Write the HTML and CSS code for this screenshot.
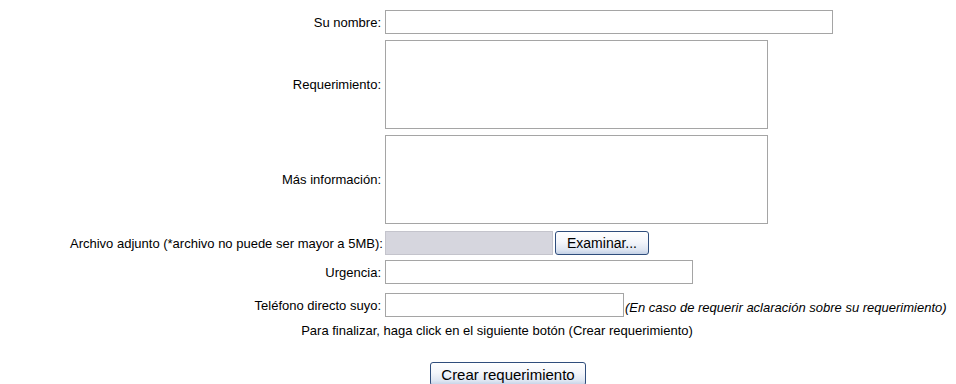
FILE: index.html
```html
<!DOCTYPE html>
<html lang="es">
<head>
    <meta charset="UTF-8">
    <title>Crear requerimiento</title>
    <link rel="stylesheet" href="styles.css">
</head>
<body>
    <form class="req-form">
        <div class="row row-first">
            <label class="label" for="nombre">Su nombre:</label>
            <input class="field field-name" type="text" id="nombre">
        </div>
        <div class="row">
            <label class="label" for="req">Requerimiento:</label>
            <textarea class="area" id="req"></textarea>
        </div>
        <div class="row">
            <label class="label" for="info">Más información:</label>
            <textarea class="area" id="info"></textarea>
        </div>
        <div class="row row-file">
            <label class="label">Archivo adjunto (*archivo no puede ser mayor a 5MB):</label>
            <div class="file-box"></div>
            <button type="button" class="btn btn-browse">Examinar...</button>
        </div>
        <div class="row row-urg">
            <label class="label" for="urg">Urgencia:</label>
            <input class="field field-urg" type="text" id="urg">
        </div>
        <div class="row row-phone">
            <label class="label" for="tel">Teléfono directo suyo:</label>
            <input class="field field-phone" type="text" id="tel">
            <span class="note">(En caso de requerir aclaración sobre su requerimiento)</span>
        </div>
        <p class="finish">Para finalizar, haga click en el siguiente botón (Crear requerimiento)</p>
        <div class="submit-row">
            <button type="button" class="btn btn-submit">Crear requerimiento</button>
        </div>
    </form>
</body>
</html>
```

FILE: styles.css
```css
body {
    margin: 0;
    background: #fff;
    color: #000;
    font-family: "Liberation Sans", Arial, sans-serif;
    font-size: 13px;
    overflow: hidden;
}

.req-form {
    padding: 10px 0 0 70px;
}

.row {
    display: flex;
    align-items: center;
    margin-top: 6px;
}

.row-first {
    margin-top: 0;
}

.row-file {
    margin-top: 7px;
}

.row-urg {
    margin-top: 5px;
}

.row-phone {
    margin-top: 9px;
}

.label {
    width: 311px;
    margin-right: 4px;
    text-align: right;
    flex-shrink: 0;
    white-space: nowrap;
}

.field,
.area {
    box-sizing: border-box;
    border: 1px solid #a5a5a5;
    background: #fff;
    margin: 0;
    font: inherit;
}

.field {
    height: 24px;
}

.field-name {
    width: 448px;
}

.field-urg {
    width: 308px;
}

.field-phone {
    width: 239px;
}

.area {
    width: 383px;
    height: 89px;
    resize: none;
}

.file-box {
    box-sizing: border-box;
    width: 168px;
    height: 24px;
    background: #d6d6de;
    border: 1px solid #c4c4cc;
}

.btn {
    box-sizing: border-box;
    height: 24px;
    padding: 0 6px;
    border: 1px solid #2f4d7c;
    border-radius: 3px;
    background: linear-gradient(#ffffff 0%, #f4f6fb 45%, #dfe6f2 80%, #c4d1e6 100%);
    color: #000;
    font-family: "Liberation Sans", Arial, sans-serif;
    font-size: 14px;
}

.btn-browse {
    width: 94px;
    margin-left: 2px;
}

.btn-submit {
    width: 156px;
    font-size: 15px;
}

.note {
    font-style: italic;
    margin-left: 1px;
    white-space: nowrap;
    align-self: flex-end;
    padding-bottom: 2px;
}

.finish {
    margin: 7px 0 0;
    width: 854px;
    text-align: center;
    line-height: 14px;
}

.submit-row {
    width: 876px;
    margin-top: 24px;
    text-align: center;
}
```
